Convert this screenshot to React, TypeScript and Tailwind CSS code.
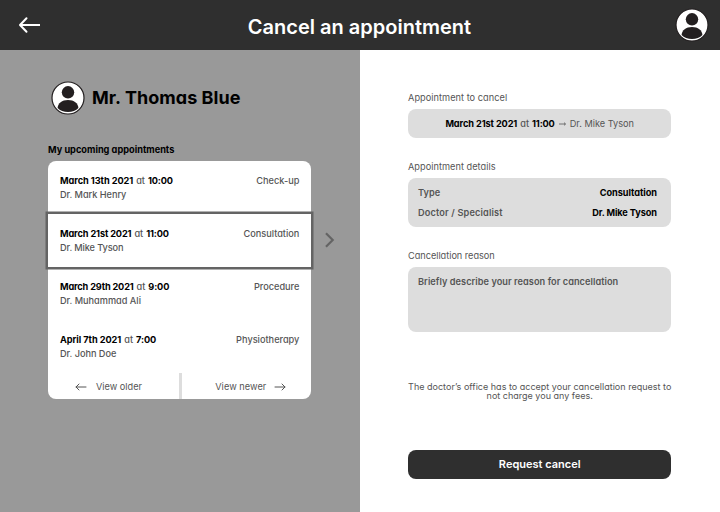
import type { ReactNode } from "react";

function Avatar({ className }: { className: string }) {
  return (
    <svg viewBox="0 0 34 34" className={className}>
      <circle cx="17" cy="17" r="16" fill="#fff" stroke="#231f20" strokeWidth="1.2" />
      <circle cx="17" cy="11.3" r="6.2" fill="#231f20" />
      <path d="M6.6 27C6.9 22.2 11 19 17 19s10.1 3.2 10.4 8C25 29.7 21.2 31 17 31S9 29.7 6.6 27Z" fill="#231f20" />
    </svg>
  );
}

function Arrow({ className }: { className: string }) {
  return (
    <svg viewBox="0 0 12 8" className={className} fill="none" stroke="#555" strokeWidth="1" strokeLinecap="round" strokeLinejoin="round">
      <path d="M11 4H1M4 1 1 4l3 3" />
    </svg>
  );
}

type Appointment = {
  date: string;
  dateClass: string;
  time: string;
  doctor: string;
  doctorClass: string;
  kind: string;
  selected?: boolean;
};

const appointments: Appointment[] = [
  { date: "March 13th 2021", dateClass: "tracking-[-0.06px]", time: "10:00", doctor: "Dr. Mark Henry", doctorClass: "tracking-[-0.04px]", kind: "Check-up" },
  { date: "March 21st 2021", dateClass: "tracking-[-0.13px]", time: "11:00", doctor: "Dr. Mike Tyson", doctorClass: "tracking-[-0.11px]", kind: "Consultation", selected: true },
  { date: "March 29th 2021", dateClass: "tracking-[-0.17px]", time: "9:00", doctor: "Dr. Muhammad Ali", doctorClass: "tracking-[-0.01px]", kind: "Procedure" },
  { date: "April 7th 2021", dateClass: "tracking-[-0.05px]", time: "7:00", doctor: "Dr. John Doe", doctorClass: "tracking-[-0.03px]", kind: "Physiotherapy" },
];

function When({ date, dateClass, time }: { date: string; dateClass: string; time: string }) {
  return (
    <span className="flex gap-[3px]">
      <b className={`font-bold text-black ${dateClass}`}>{date}</b>
      <span className="font-medium">at</span>
      <b className="font-bold tracking-[-0.15px] text-black">{time}</b>
    </span>
  );
}

function Row({ a }: { a: Appointment }) {
  return (
    <li className={`h-[53px] px-3 pt-[13px] leading-[14px] ${a.selected ? "relative bg-white ring-[2.5px] ring-[#646464]" : ""}`}>
      <div className="flex justify-between">
        <When date={a.date} dateClass={a.dateClass} time={a.time} />
        <span className="font-medium">{a.kind}</span>
      </div>
      <div className={`font-medium ${a.doctorClass}`}>{a.doctor}</div>
    </li>
  );
}

function Label({ children, className }: { children: ReactNode; className: string }) {
  return <h3 className={`h-3 leading-3 ${className}`}>{children}</h3>;
}

export default function App() {
  return (
    <div className="flex h-[512px] w-[720px] flex-col overflow-hidden bg-white font-['Inter',sans-serif] text-[9.2px] whitespace-nowrap text-[#555]">
      <header className="flex h-[50px] shrink-0 items-center justify-between bg-[#2f2f2f] pr-[11px] pl-[18px]">
        <svg viewBox="0 0 24 18" className="h-[18px] w-6" fill="none" stroke="#fff" strokeWidth="2">
          <path d="M22 9H2" />
          <path d="M8.5 2.3 2 9l6.5 6.7" strokeLinecap="round" strokeLinejoin="round" />
        </svg>
        <h1 className="pt-[3px] pl-[2px] text-xl leading-6 font-semibold text-white">Cancel an appointment</h1>
        <Avatar className="size-[34px]" />
      </header>

      <div className="flex flex-1 [font-feature-settings:'cv11']">
        <section className="w-[360px] bg-[#999] pt-[30px] pl-12">
          <div className="flex h-[35px] items-center gap-[7px] pl-[3px]">
            <Avatar className="size-[34px]" />
            <h2 className="pt-px text-[18px] leading-6 font-bold tracking-[0.05px] text-black">Mr. Thomas Blue</h2>
          </div>
          <Label className="mt-[29px] font-bold tracking-[0.01px] text-black">My upcoming appointments</Label>
          <div className="mt-[5px] flex items-center">
            <div className="w-[263.4px] shrink-0 rounded-lg bg-white">
              <ul>
                {appointments.map((a) => (
                  <Row key={a.date} a={a} />
                ))}
              </ul>
              <div className="flex h-[26.4px] items-center">
                <div className="flex w-[131px] items-center gap-[9px] pt-px pl-[27px]">
                  <Arrow className="h-2 w-3" />
                  <span>View older</span>
                </div>
                <div className="h-full w-[2.5px] bg-[#ddd]" />
                <div className="flex flex-1 items-center justify-end gap-[8px] pt-px pr-[25px]">
                  <span className="tracking-[0.05px]">View newer</span>
                  <Arrow className="h-2 w-3 rotate-180" />
                </div>
              </div>
            </div>
            <svg viewBox="0 0 10 16" className="mb-[80px] ml-[14px] h-4 w-2.5" fill="none" stroke="#646464" strokeWidth="2.2">
              <path d="m1 1.3 6.7 6.7L1 14.7" />
            </svg>
          </div>
        </section>

        <section className="flex flex-1 flex-col pt-[42px] pr-[48.6px] pl-12">
          <Label className="tracking-[0.04px]">Appointment to cancel</Label>
          <div className="mt-[4.5px] flex h-[29.5px] items-center justify-center gap-[3px] rounded-lg bg-[#ddd] pt-px">
            <When date="March 21st 2021" dateClass="tracking-[-0.1px]" time="11:00" />
            <svg viewBox="0 0 9 6" className="h-1.5 w-[9px]" fill="none" stroke="#555" strokeWidth="0.8">
              <path d="M1 3h6.5M6 1.6 7.5 3 6 4.4" />
            </svg>
            <span>Dr. Mike Tyson</span>
          </div>

          <Label className="mt-[23px] tracking-[0.03px]">Appointment details</Label>
          <dl className="mt-[5px] flex h-[49px] flex-col justify-between rounded-lg bg-[#ddd] py-2 pr-[14.5px] pl-2.5 leading-[13px]">
            <div className="flex justify-between">
              <dt className="font-semibold">Type</dt>
              <dd className="font-bold tracking-[-0.06px] text-black">Consultation</dd>
            </div>
            <div className="flex justify-between">
              <dt className="font-semibold tracking-[0.15px]">Doctor / Specialist</dt>
              <dd className="font-bold tracking-[-0.1px] text-black">Dr. Mike Tyson</dd>
            </div>
          </dl>

          <Label className="mt-[23px] tracking-[-0.03px]">Cancellation reason</Label>
          <div className="mt-[5px] h-[65px] rounded-lg bg-[#ddd] px-2.5 pt-2 leading-[13px] font-semibold tracking-[0.05px]">
            Briefly describe your reason for cancellation
          </div>

          <p className="-mx-1 mt-[49.5px] text-center text-[9px] leading-[9.5px] tracking-[0.01px]">
            The doctor’s office has to accept your cancellation request to
            <br />
            not charge you any fees.
          </p>
          <button className="mt-[49px] h-[29.5px] rounded-lg bg-[#2f2f2f] text-[11px] font-semibold text-white [font-feature-settings:normal]">
            Request cancel
          </button>
        </section>
      </div>
    </div>
  );
}
